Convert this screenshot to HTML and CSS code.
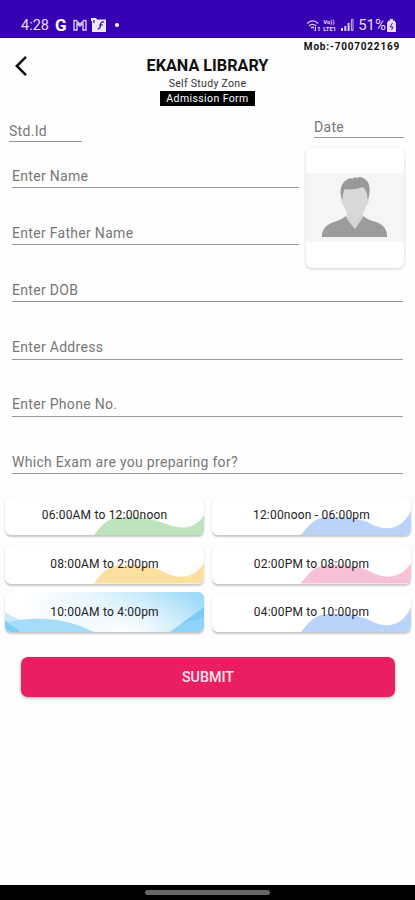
FILE: index.html
```html
<!DOCTYPE html>
<html lang="en">
<head>
    <meta charset="UTF-8">
    <meta name="viewport" content="width=device-width, initial-scale=1.0">
    <title>Ekana Library</title>
    <link rel="stylesheet" href="styles.css">
</head>
<body>

    <!-- Status bar -->
    <div class="status-bar">
        <div class="status-left">
            <span class="time">4:28</span>
            <span class="google">G</span>
            <svg class="mail-icon" width="14" height="12" viewBox="0 0 14 12" fill="none" stroke="#d9ccf5" stroke-width="1.4">
                <path d="M1 1.5v9.5h3V4.5l3 2.5 3-2.5V11h3V1.5h-2L7 5 3 1.5z"/>
            </svg>
            <svg class="app-icon" width="16" height="14" viewBox="0 0 16 14">
                <path d="M0 0h5l1 1.5h9V14H1V3H0z" fill="#eee8fb"/>
                <path d="M13 4c-3-.5-3.500 1-3.500 3 0 3-1 4-3 4M8 7h4M3 2v3" fill="none" stroke="#3700b3" stroke-width="1.2"/>
            </svg>
            <span class="dot"></span>
        </div>
        <div class="status-right">
            <svg width="15" height="13" viewBox="0 0 15 13" fill="none" stroke="#d9ccf5" stroke-width="1.3">
                <path d="M1 4.5c3.5-3.5 8-3.5 11 0M3 7c2-2.2 5-2.2 7 0M5 9c1-1 2-1 3 0"/>
                <path d="M9.5 8v4M8 10.5l1.5 1.5M13 12V8M11.8 9L13 8l1.2 1" stroke-width="1"/>
            </svg>
            <span class="volte"><span>Vo))</span><span>LTE1</span></span>
            <svg width="13" height="12" viewBox="0 0 13 12" fill="#d9ccf5">
                <path d="M0 9h2v3H0zM3.3 7h2v5h-2zM6.600 4h2v8h-2z"/>
                <path d="M10.4.5h1.6v11h-1.6z" fill="none" stroke="#d9ccf5" stroke-width=".9"/>
            </svg>
            <span class="battery">51%</span>
            <svg width="9" height="13" viewBox="0 0 9 13">
                <path d="M3 0h3v1.5h1.5L9 4v9H0V4l1.5-2.5H3z" fill="#e6dcfa"/>
                <path d="M5.5 4L3 8h3l-1.5 3" fill="none" stroke="#3700b3" stroke-width=".9"/>
            </svg>
        </div>
    </div>

    <!-- Header -->
    <p class="mobile">Mob:-7007022169</p>
    <div class="header">
        <svg class="back" width="14" height="22" viewBox="0 0 14 22" fill="none" stroke="#111" stroke-width="2.5">
            <path d="M12 1.8L2.8 11 12 20.2"/>
        </svg>
        <div class="heading">
            <h1>EKANA LIBRARY</h1>
            <p class="subtitle">Self Study Zone</p>
            <p class="form-name">Admission Form</p>
        </div>
    </div>

    <!-- Admission form -->
    <form>
        <div class="top">
            <div class="top-left">
                <input class="std-id" type="text" placeholder="Std.Id">
                <input type="text" placeholder="Enter Name">
                <input type="text" placeholder="Enter Father Name">
            </div>
            <div class="top-right">
                <input class="date" type="text" placeholder="Date">
                <div class="photo">
                    <svg width="98" height="69" viewBox="0 0 98 69">
                        <rect width="98" height="69" fill="#f5f5f5"/>
                        <path d="M41 40h16v9l-8 9-9-8z" fill="#d5d5d5"/>
                        <path d="M16 64v-3c1-6 6-10 12-12 4-1 8-3 12-6 1 4 4 7 9 13 4-6 7-9 8-13 4 3 8 5 13 6 6 2 10 6 11 12v3z" fill="#9b9b9b"/>
                        <path d="M36 27c-2-6-2-11 0-15 2-4 5-6 9-7l1 1 3-2 1 1 4-1c5 1 8 4 9 8 1 5 1 9-1 15z" fill="#999"/>
                        <path d="M36.5 26c0-4 1-7 2-10 7 1 13 0 18-2 4 3 5 8 5 12 1-1 2 0 1 3-.5 2-1 3-2 3-2 7-6 13-11 13s-10-6-12-13c-1 0-2-1-2-3-.5-2 0-3 1-3z" fill="#d8d8d8"/>
                    </svg>
                </div>
            </div>
        </div>
        <div class="fields">
            <input type="text" placeholder="Enter DOB">
            <input type="text" placeholder="Enter Address">
            <input type="text" placeholder="Enter Phone No.">
            <input type="text" placeholder="Which Exam are you preparing for?">
        </div>

        <!-- Time slots -->
        <div class="slots">
            <button type="button" class="slot green">
                <svg viewBox="0 0 200 38" preserveAspectRatio="none"><path d="M89 38C97 29 101 21 115 20C132 19 143 20 157 25C168 29 187 37 200 18V38z"/></svg>
                <span>06:00AM to 12:00noon</span>
            </button>
            <button type="button" class="slot blue">
                <svg viewBox="0 0 200 38" preserveAspectRatio="none"><path d="M89 38C97 29 101 21 115 20C132 19 143 20 157 25C168 32 189 37 200 13V38z"/></svg>
                <span>12:00noon - 06:00pm</span>
            </button>
            <button type="button" class="slot yellow">
                <svg viewBox="0 0 200 38" preserveAspectRatio="none"><path d="M89 38C97 29 101 21 115 20C132 19 143 20 157 25C168 32 187 37 200 18V38z"/></svg>
                <span>08:00AM to 2:00pm</span>
            </button>
            <button type="button" class="slot pink">
                <svg viewBox="0 0 200 38" preserveAspectRatio="none"><path d="M89 38C97 29 101 21 115 20C132 19 143 20 157 25C168 32 187 37 200 18V38z"/></svg>
                <span>02:00PM to 08:00pm</span>
            </button>
            <button type="button" class="slot sky">
                <svg viewBox="0 0 200 40" preserveAspectRatio="none">
                    <path d="M0 20C20 32 45 38 90 40H0z" fill="#c8ebfc"/>
                    <path d="M2 30C30 23 65 26 90 40H12z" fill="#a5dcfa"/>
                    <path d="M0 28L16 40H0z" fill="#7fcdf6"/>
                    <path d="M165 40C178 31 187 24 200 15V40z" fill="#8fd5f9"/>
                    <path d="M176 32C184 29 193 27 200 26V15z" fill="#7ecbf6"/>
                </svg>
                <span>10:00AM to 4:00pm</span>
            </button>
            <button type="button" class="slot blue">
                <svg viewBox="0 0 200 38" preserveAspectRatio="none"><path d="M89 38C97 29 101 21 115 20C132 19 143 20 157 25C168 32 189 37 200 13V38z"/></svg>
                <span>04:00PM to 10:00pm</span>
            </button>
        </div>

        <button type="submit" class="submit">SUBMIT</button>
    </form>

    <!-- Navigation bar -->
    <div class="nav-bar"><div class="handle"></div></div>

</body>
</html>
```

FILE: styles.css
```css
* {
    box-sizing: border-box;
}
body {
    margin: 0;
    height: 900px;
    display: flex;
    flex-direction: column;
    font-family: Roboto, sans-serif;
    background-color: #fefefe;
    overflow: hidden;
}
h1, p {
    margin: 0;
}
.status-bar {
    height: 38px;
    flex: none;
    padding: 12px 19px 0 21px;
    display: flex;
    justify-content: space-between;
    background-color: #3700b3;
    color: #e6dcfa;
}
.status-left, .status-right {
    height: 26px;
    display: flex;
    align-items: center;
}
.time {
    width: 34px;
    font-size: 14.5px;
}
.google {
    width: 18px;
    font-size: 17px;
    font-weight: bold;
    color: white;
}
.app-icon {
    margin-left: 4px;
}
.dot {
    width: 4px;
    height: 4px;
    margin-left: 8px;
    border-radius: 50%;
    background-color: white;
}
.volte {
    width: 15px;
    margin: 0 3px 0 2px;
    display: flex;
    flex-direction: column;
    font-size: 6px;
    line-height: 7px;
    font-weight: bold;
}
.battery {
    margin: 0 1px 0 4px;
    font-size: 15px;
}
.mobile {
    height: 17px;
    padding-right: 15px;
    text-align: right;
    font-size: 10px;
    line-height: 17px;
    font-weight: bold;
    letter-spacing: 0.8px;
    color: #111;
}
.header {
    height: 60px;
    padding: 0 14px;
    display: grid;
    grid-template-columns: 14px 1fr 14px;
}
.back {
    margin-top: -1px;
}
.heading {
    display: flex;
    flex-direction: column;
    align-items: center;
    color: #111;
}
.back {
    align-self: start;
    margin-top: 0;
}
h1 {
    font-size: 16.2px;
    line-height: 21px;
}
.subtitle {
    font-size: 10.5px;
    line-height: 15px;
    letter-spacing: 0.3px;
    color: #333;
}
.form-name {
    width: 95px;
    height: 15px;
    text-align: center;
    font-size: 10.5px;
    line-height: 15px;
    letter-spacing: 0.4px;
    background-color: black;
    color: white;
}
.top {
    height: 130px;
    display: flex;
}
.top-left {
    width: 299px;
    padding-left: 12px;
}
input {
    display: block;
    width: 100%;
    height: 24px;
    margin: 0 0 33.3px;
    padding: 0;
    border: none;
    border-bottom: 1px solid #999;
    background: none;
    font-family: Roboto, sans-serif;
    font-size: 14px;
    letter-spacing: 0.3px;
    outline: none;
}
input::placeholder {
    color: #777;
}
.std-id {
    width: 73px;
    height: 22px;
    margin: 5px 0 22px -3px;
}
.top-right {
    width: 98px;
    margin-left: 7px;
}
.date {
    width: 90px;
    height: 22px;
    margin: 1px 0 10px 8px;
}
.photo {
    height: 120px;
    padding-bottom: 2px;
    display: flex;
    align-items: center;
    border-radius: 6px;
    background-color: white;
    box-shadow: 0 1px 3px rgba(0, 0, 0, 0.2);
}
.fields {
    padding: 33.4px 12px 0;
}
.fields input:last-child {
    margin-bottom: 0;
}
.slots {
    padding: 22.6px 4px 0 5px;
    display: grid;
    grid-template-columns: 199px 199px;
    gap: 10px 8px;
}
.slot {
    height: 38.5px;
    padding: 0;
    display: grid;
    place-items: center;
    border: none;
    border-radius: 6px;
    overflow: hidden;
    background-color: white;
    box-shadow: 0 1.5px 2px rgba(0, 0, 0, 0.22);
    font-family: Roboto, sans-serif;
    font-size: 12px;
    letter-spacing: 0.2px;
    color: #222;
}
.slot svg, .slot span {
    grid-area: 1 / 1;
}
.slot svg {
    width: 100%;
    height: 38.5px;
}
.slot span {
    z-index: 1;
    padding-bottom: 2px;
}
.green {
    fill: #bde5bd;
}
.blue {
    fill: #b9d3fa;
}
.yellow {
    fill: #fbe0a0;
}
.pink {
    fill: #f8c0d6;
}
.sky {
    height: 40.5px;
    margin-top: -2px;
    background: radial-gradient(ellipse 110px 45px at 60% 100%, white, rgba(255, 255, 255, 0)),
        linear-gradient(100deg, white 10%, #e4f6ff 40%, #b0e1fb 75%, #98d8f9 100%);
}
.sky svg {
    height: 40.5px;
}
.sky span {
    padding-bottom: 0;
}
.submit {
    display: block;
    width: 374px;
    height: 40px;
    margin: 24.5px 0 0 21px;
    border: none;
    border-radius: 7px;
    background-color: #e91e63;
    box-shadow: 0 1px 3px rgba(0, 0, 0, 0.35);
    font-family: Roboto, sans-serif;
    font-size: 14.3px;
    font-weight: 500;
    color: #ffe4ee;
}
.nav-bar {
    height: 15px;
    flex: none;
    margin-top: auto;
    padding-top: 5px;
    background-color: black;
}
.handle {
    width: 125px;
    height: 5px;
    margin: 0 auto;
    border-radius: 3px;
    background-color: #666;
}
```
